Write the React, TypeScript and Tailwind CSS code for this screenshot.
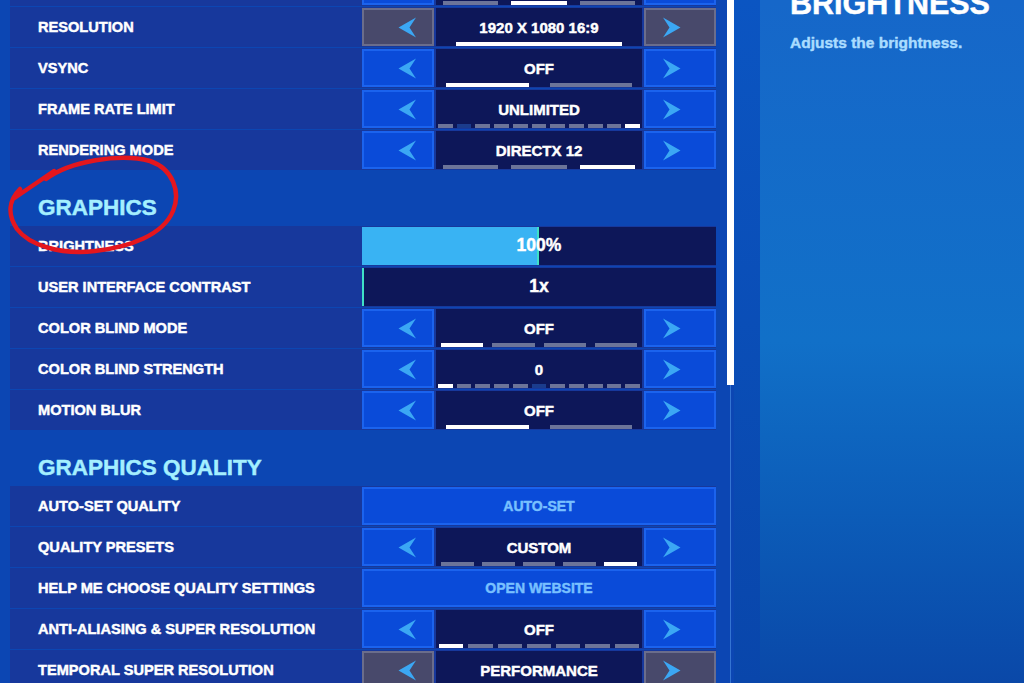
type Seg = "on" | "off" | "na";

type Control =
  | { kind: "pick"; value: string; segs: Seg[]; bar: string; disabled?: boolean }
  | { kind: "slider"; value: string; pct: number }
  | { kind: "button"; value: string };

type Item = { header: string } | { label: string; control: Control };

const o: Seg = "off";

const ITEMS: Item[] = [
  { label: "", control: { kind: "pick", value: "", segs: [o, "on", o], bar: "mx-[7px] gap-[13px]" } },
  { label: "RESOLUTION", control: { kind: "pick", value: "1920 X 1080 16:9", segs: ["on"], bar: "mx-[20px]", disabled: true } },
  { label: "VSYNC", control: { kind: "pick", value: "OFF", segs: ["on", o], bar: "mx-[10px] gap-[21px]" } },
  { label: "FRAME RATE LIMIT", control: { kind: "pick", value: "UNLIMITED", segs: [o, "na", o, o, o, o, o, o, o, o, "on"], bar: "mx-[2px] gap-[4px]" } },
  { label: "RENDERING MODE", control: { kind: "pick", value: "DIRECTX 12", segs: [o, o, "on"], bar: "mx-[7px] gap-[13px]" } },
  { header: "GRAPHICS" },
  { label: "BRIGHTNESS", control: { kind: "slider", value: "100%", pct: 50 } },
  { label: "USER INTERFACE CONTRAST", control: { kind: "slider", value: "1x", pct: 0 } },
  { label: "COLOR BLIND MODE", control: { kind: "pick", value: "OFF", segs: ["on", o, o, o], bar: "mx-[5px] gap-[9px]" } },
  { label: "COLOR BLIND STRENGTH", control: { kind: "pick", value: "0", segs: ["on", o, o, o, o, "na", o, o, o, o, o], bar: "mx-[2px] gap-[4px]" } },
  { label: "MOTION BLUR", control: { kind: "pick", value: "OFF", segs: ["on", o], bar: "mx-[10px] gap-[21px]" } },
  { header: "GRAPHICS QUALITY" },
  { label: "AUTO-SET QUALITY", control: { kind: "button", value: "AUTO-SET" } },
  { label: "QUALITY PRESETS", control: { kind: "pick", value: "CUSTOM", segs: [o, o, o, o, "on"], bar: "mx-[5px] gap-[8px]" } },
  { label: "HELP ME CHOOSE QUALITY SETTINGS", control: { kind: "button", value: "OPEN WEBSITE" } },
  { label: "ANTI-ALIASING & SUPER RESOLUTION", control: { kind: "pick", value: "OFF", segs: ["on", o, o, o, o, o, o], bar: "mx-[3px] gap-[5px]" } },
  { label: "TEMPORAL SUPER RESOLUTION", control: { kind: "pick", value: "PERFORMANCE", segs: [o, "on", o], bar: "mx-[7px] gap-[13px]", disabled: true } },
];

const SEG_COLOR: Record<Seg, string> = {
  on: "bg-white",
  off: "bg-[#6c7499]",
  na: "bg-[#1b3c8c]",
};

// heavier look for the game's chunky type
const HEAVY = "font-bold [-webkit-text-stroke-width:0.45px]";

function Chevron({ dir }: { dir: "left" | "right" }) {
  return (
    <svg width="19" height="21" viewBox="0 0 19 21" className={dir === "right" ? "-scale-x-100" : ""}>
      <polygon points="18,0.5 0.5,10.5 18,20.5 11.5,10.5" fill="#3ba7f4" />
    </svg>
  );
}

function ArrowBox({ dir, disabled }: { dir: "left" | "right"; disabled?: boolean }) {
  const tone = disabled ? "bg-[#48496b] border-[#6b6d8b]" : "bg-[#0a4bd9] border-[#1b63ee]";
  const side = dir === "left" ? "justify-end pr-[15px]" : "justify-start pl-[16px]";
  return (
    <div className={`w-[72px] h-full flex items-center border-2 ${tone} ${side}`}>
      <Chevron dir={dir} />
    </div>
  );
}

function Picker({ c }: { c: Extract<Control, { kind: "pick" }> }) {
  return (
    <div className="flex h-full gap-[2px]">
      <ArrowBox dir="left" disabled={c.disabled} />
      <div className="flex-1 h-full bg-[#0d1759] flex flex-col items-center pt-[12px]">
        <span className={`h-[15px] text-[15px] leading-none text-white ${HEAVY}`}>{c.value}</span>
        <div className={`self-stretch flex h-[4px] mt-[7px] ${c.bar}`}>
          {c.segs.map((s, i) => (
            <div key={i} className={`flex-1 ${SEG_COLOR[s]}`} />
          ))}
        </div>
      </div>
      <ArrowBox dir="right" disabled={c.disabled} />
    </div>
  );
}

function Slider({ c }: { c: Extract<Control, { kind: "slider" }> }) {
  return (
    <div className="relative h-full bg-[#0d1759] flex items-center justify-center">
      <div className="absolute left-0 top-0 bottom-0 bg-[#39b3f3] border-r-2 border-[#3fe0c6]" style={{ width: `${c.pct}%` }} />
      <span className={`relative text-[17.5px] leading-none text-white ${HEAVY}`}>{c.value}</span>
    </div>
  );
}

function WideButton({ c }: { c: Extract<Control, { kind: "button" }> }) {
  return (
    <div className="h-full bg-[#0a4bd9] border-2 border-[#1b63ee] flex items-center justify-center">
      <span className={`text-[14px] leading-none text-[#78c0ff] ${HEAVY}`}>{c.value}</span>
    </div>
  );
}

function SettingRow({ label, control }: { label: string; control: Control }) {
  return (
    <div className="h-[40px] flex bg-[#17389c]">
      <div className={`w-[352px] flex items-center pl-[28px] pt-[2px] text-[14.6px] text-white ${HEAVY}`}>{label}</div>
      <div className="w-[354px] py-[1px]">
        {control.kind === "pick" && <Picker c={control} />}
        {control.kind === "slider" && <Slider c={control} />}
        {control.kind === "button" && <WideButton c={control} />}
      </div>
    </div>
  );
}

export default function App() {
  return (
    <div className="relative w-[1024px] h-[683px] overflow-hidden flex bg-[#0c46b3] font-['Liberation_Sans',Arial,sans-serif]">
      {/* settings list */}
      <div className="w-[727px] pl-[10px] pr-[11px]">
        <div className="flex flex-col gap-[1px] mt-[-34px]">
          {ITEMS.map((it, i) =>
            "header" in it ? (
              <div key={i} className={`h-[54px] pt-[26px] pl-[28px] text-[22.5px] leading-none text-[#a4efff] ${HEAVY}`}>
                {it.header}
              </div>
            ) : (
              <SettingRow key={i} label={it.label} control={it.control} />
            )
          )}
        </div>
      </div>

      {/* scrollbar */}
      <div className="w-[7px] flex flex-col items-center">
        <div className="w-full h-[385px] bg-white" />
        <div className="flex-1 w-[1px] bg-[#3474d2]" />
      </div>

      <div className="w-[26px] bg-linear-to-b from-[#0b55c2] to-[#0946ab]" />

      {/* description panel */}
      <div className="flex-1 pl-[30px] bg-linear-to-b from-[#1667c9] via-[#1170c8] to-[#0a48a8]">
        <div className={`mt-[-12px] text-[30.5px] leading-none text-white ${HEAVY}`}>BRIGHTNESS</div>
        <div className={`mt-[16px] text-[15.5px] leading-none text-[#aadcff] ${HEAVY}`}>Adjusts the brightness.</div>
      </div>

      {/* red marker circle */}
      <svg className="absolute left-0 top-0 pointer-events-none" width="200" height="270" viewBox="0 0 200 270">
        <path
          d="M13 199 L54 171 L46 179 C70 161 120 153 150 161 C173 169 181 192 173 211 C163 235 130 247 95 251 C60 255 29 245 17 229 C7 214 9 200 20 189"
          fill="none"
          stroke="#e4161d"
          strokeWidth="4.5"
          strokeLinecap="round"
          strokeLinejoin="round"
        />
      </svg>
    </div>
  );
}
